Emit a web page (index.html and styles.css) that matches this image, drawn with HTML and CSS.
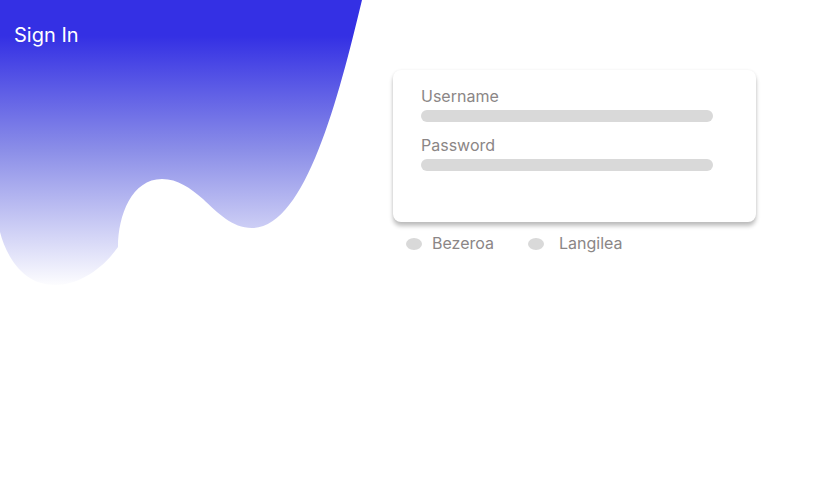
FILE: index.html
```html
<!DOCTYPE html>
<html>
<head>
<meta charset="utf-8">
<link rel="stylesheet" href="styles.css">
</head>
<body>
<div class="page">
  <svg class="blob" width="380" height="300" viewBox="0 0 380 300" aria-hidden="true">
    <defs>
      <linearGradient id="g" x1="0" y1="0" x2="0" y2="300" gradientUnits="userSpaceOnUse">
        <stop offset="0.12" stop-color="#3430e4"/>
        <stop offset="0.5" stop-color="#8b8ee8"/>
        <stop offset="0.96" stop-color="#ffffff"/>
      </linearGradient>
    </defs>
    <path fill="url(#g)" d="M0 0 L362 0 C338 100 305 228 252 228 C232 228 218 213 203 199 C190 188 178 179 162 179 C132 179 118 215 118 247 C102 270 78 285 55 285 C22 285 6 255 0 232 Z"/>
  </svg>
  <h1 class="title">Sign In</h1>
  <div class="login">
    <div class="card">
      <div class="field">
        <div class="label">Username</div>
        <div class="bar"></div>
      </div>
      <div class="field">
        <div class="label">Password</div>
        <div class="bar"></div>
      </div>
    </div>
    <div class="roles">
      <div class="role"><span class="dot"></span><span class="role-text">Bezeroa</span></div>
      <div class="role role-wide"><span class="dot"></span><span class="role-text">Langilea</span></div>
    </div>
  </div>
</div>
</body>
</html>
```
FILE: styles.css
```css
html, body {
  margin: 0;
  padding: 0;
  background: #ffffff;
  font-family: Inter, "Noto Sans", sans-serif;
}
.page {
  position: relative;
  width: 813px;
  height: 484px;
  overflow: hidden;
}
.blob {
  position: absolute;
  left: 0;
  top: 0;
  z-index: 0;
}
.title {
  position: relative;
  z-index: 1;
  margin: 0;
  padding: 23px 0 0 14px;
  font-size: 20px;
  font-weight: 400;
  line-height: 24px;
  color: #ffffff;
}
.login {
  position: relative;
  z-index: 1;
  margin: 23px 0 0 393px;
  width: 363px;
}
.card {
  background: #ffffff;
  border-radius: 8px;
  box-shadow: 0 4px 4px rgba(0, 0, 0, 0.25), 0 0 3px rgba(0, 0, 0, 0.06);
  padding: 17px 43px 51px 28px;
  display: flex;
  flex-direction: column;
  gap: 14px;
}
.field {
  display: flex;
  flex-direction: column;
  gap: 4px;
}
.label {
  font-size: 16px;
  line-height: 19px;
  color: #8b8686;
}
.bar {
  height: 12px;
  border-radius: 6px;
  background: #d9d9d9;
}
.roles {
  display: flex;
  gap: 34px;
  margin-top: 12px;
  padding-left: 13px;
}
.role {
  display: flex;
  align-items: center;
  gap: 10px;
}
.role-wide {
  gap: 15px;
}
.dot {
  width: 16px;
  height: 12px;
  border-radius: 50%;
  background: #d9d9d9;
}
.role-text {
  font-size: 16px;
  line-height: 19px;
  color: #8b8686;
}
```
